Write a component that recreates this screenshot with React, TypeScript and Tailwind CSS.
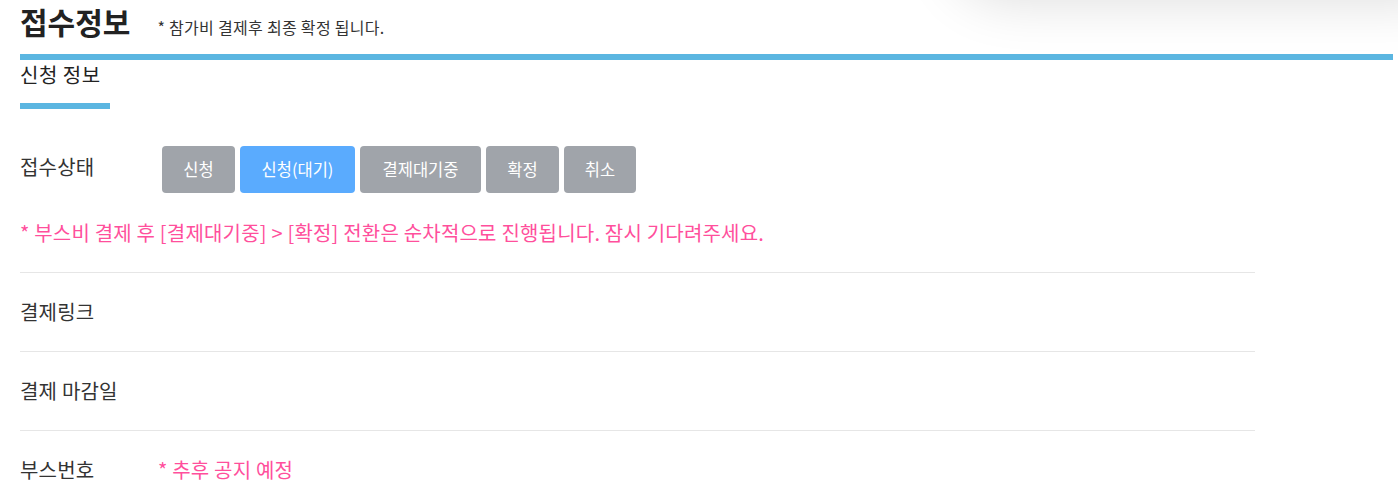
const statuses = [
  { label: "신청", w: "w-[73px]", active: false },
  { label: "신청(대기)", w: "w-[115px]", active: true },
  { label: "결제대기중", w: "w-[121px]", active: false },
  { label: "확정", w: "w-[73px]", active: false },
  { label: "취소", w: "w-[72px]", active: false },
];

const font = { fontFamily: '"Noto Sans CJK KR", "Noto Sans", sans-serif' };

function InfoRow({ label, children }: { label: string; children?: React.ReactNode }) {
  return (
    <div className="flex h-[79px] items-center border-t border-[#e6e6e6]">
      <div className="w-[138px] shrink-0 text-[20px] tracking-[0.2px] text-[#333]">{label}</div>
      {children}
    </div>
  );
}

export default function App() {
  return (
    <div
      className="relative h-[500px] w-[1398px] overflow-hidden bg-white pl-5 text-[#333]"
      style={font}
    >
      {/* shadow from the header panel above */}
      <div className="absolute -top-[100px] left-[950px] -right-[40px] h-[100px] rounded-bl-[60px] bg-white shadow-[0_0_55px_rgba(0,0,0,0.14)]" />

      <div className="flex h-[54px] items-baseline pt-[1px]">
        <h1 className="text-[30px] font-bold leading-[40px] text-[#222]">접수정보</h1>
        <span className="ml-[27px] text-[16px] tracking-[0.3px] text-[#333]">
          * 참가비 결제후 최종 확정 됩니다.
        </span>
      </div>
      <div className="h-[6px] w-[1373px] bg-[#5bb6e1]" />

      <div className="w-[1235px]">
        <h2 className="text-[20px] leading-[30px] tracking-[0.5px] text-[#222]">신청 정보</h2>
        <div className="mt-[13px] h-[6px] w-[90px] bg-[#5bb6e1]" />

        <div className="mt-[37px] flex items-center">
          <div className="-mt-[5px] w-[142px] shrink-0 text-[20px] tracking-[0.2px] text-[#333]">
            접수상태
          </div>
          <div className="flex gap-[5px]">
            {statuses.map((s) => (
              <button
                key={s.label}
                className={`${s.w} h-[47px] rounded-[4px] text-[16.5px] text-white ${
                  s.active ? "bg-[#5aabfe]" : "bg-[#a0a4aa]"
                }`}
              >
                {s.label}
              </button>
            ))}
          </div>
        </div>

        <p className="mt-[25px] text-[20px] leading-[30px] tracking-[0.2px] text-[#ff4f9c]">
          * 부스비 결제 후 [결제대기중] &gt; [확정] 전환은 순차적으로 진행됩니다. 잠시 기다려주세요.
        </p>

        <div className="mt-[24px]">
          <InfoRow label="결제링크" />
          <InfoRow label="결제 마감일" />
          <InfoRow label="부스번호">
            <span className="text-[20px] tracking-[0.2px] text-[#ff4f9c]">* 추후 공지 예정</span>
          </InfoRow>
        </div>
      </div>
    </div>
  );
}
